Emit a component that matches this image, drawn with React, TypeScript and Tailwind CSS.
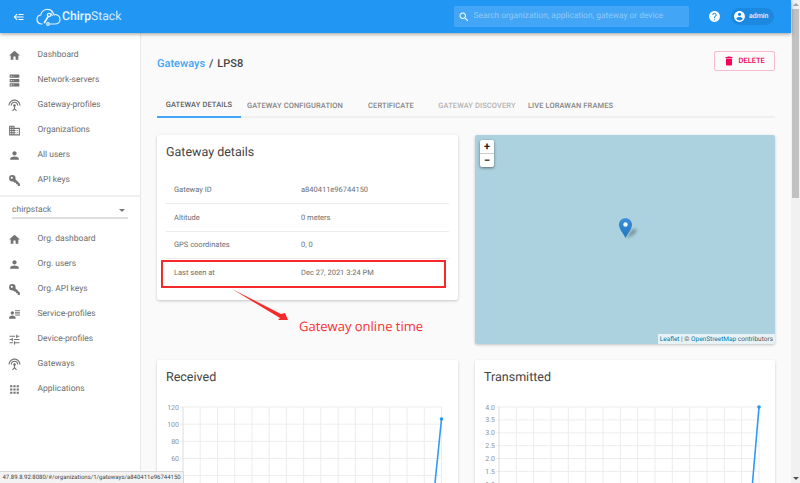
import React from 'react';

const icons = {
  home: 'M10 20v-6h4v6h5v-8h3L12 3 2 12h3v8z',
  server: 'M4,1H20A1,1 0 0,1 21,2V6A1,1 0 0,1 20,7H4A1,1 0 0,1 3,6V2A1,1 0 0,1 4,1M4,9H20A1,1 0 0,1 21,10V14A1,1 0 0,1 20,15H4A1,1 0 0,1 3,14V10A1,1 0 0,1 4,9M4,17H20A1,1 0 0,1 21,18V22A1,1 0 0,1 20,23H4A1,1 0 0,1 3,22V18A1,1 0 0,1 4,17M9,5H10V3H9V5M9,13H10V11H9V13M9,21H10V19H9V21M5,3V5H7V3H5M5,11V13H7V11H5M5,19V21H7V19H5Z',
  antenna: 'M12 5c-3.87 0-7 3.13-7 7h2c0-2.76 2.24-5 5-5s5 2.24 5 5h2c0-3.87-3.13-7-7-7zm1 9.29c.88-.39 1.5-1.26 1.5-2.29 0-1.38-1.12-2.5-2.5-2.5S9.5 10.62 9.5 12c0 1.02.62 1.9 1.5 2.29v3.3L7.59 21 9 22.41l3-3 3 3L16.41 21 13 17.59v-3.3zM12 1C5.93 1 1 5.93 1 12h2c0-4.97 4.03-9 9-9s9 4.03 9 9h2c0-6.07-4.93-11-11-11z',
  domain: 'M12 7V3H2v18h20V7H12zM6 19H4v-2h2v2zm0-4H4v-2h2v2zm0-4H4V9h2v2zm0-4H4V5h2v2zm4 12H8v-2h2v2zm0-4H8v-2h2v2zm0-4H8V9h2v2zm0-4H8V5h2v2zm10 12h-8v-2h2v-2h-2v-2h2v-2h-2V9h8v10zm-2-8h-2v2h2v-2zm0 4h-2v2h2v-2z',
  person: 'M12 12c2.21 0 4-1.79 4-4s-1.79-4-4-4-4 1.79-4 4 1.79 4 4 4zm0 2c-2.67 0-8 1.34-8 4v2h16v-2c0-2.66-5.33-4-8-4z',
  key: 'M22,18V22H18V19H15V16H12L9.74,13.74C9.19,13.91 8.61,14 8,14A6,6 0 0,1 2,8A6,6 0 0,1 8,2A6,6 0 0,1 14,8C14,8.61 13.91,9.19 13.74,9.74L22,18M7,5A2,2 0 0,0 5,7A2,2 0 0,0 7,9A2,2 0 0,0 9,7A2,2 0 0,0 7,5Z',
  details: 'M11,9C11,10.66 9.66,12 8,12C6.34,12 5,10.66 5,9C5,7.34 6.34,6 8,6C9.66,6 11,7.34 11,9M14,20H2V18C2,15.79 4.69,14 8,14C11.31,14 14,15.79 14,18M22,12V14H13V12M22,8V10H13V8M22,4V6H13V4Z',
  tune: 'M3 17v2h6v-2H3zM3 5v2h10V5H3zm10 16v-2h8v-2h-8v-2h-2v6h2zM7 9v2H3v2h4v2h2V9H7zm14 4v-2H11v2h10zm-6-4h2V7h4V5h-4V3h-2v6z',
  apps: 'M4 8h4V4H4v4zm6 12h4v-4h-4v4zm-6 0h4v-4H4v4zm0-6h4v-4H4v4zm6 0h4v-4h-4v4zm6-10v4h4V4h-4zm-6 4h4V4h-4v4zm6 6h4v-4h-4v4zm0 6h4v-4h-4v4z',
  trash: 'M6 19c0 1.1.9 2 2 2h8c1.1 0 2-.9 2-2V7H6v12zM19 4h-3.5l-1-1h-5l-1 1H5v2h14V4z',
  search: 'M15.5 14h-.79l-.28-.27C15.41 12.59 16 11.11 16 9.5 16 5.91 13.09 3 9.5 3S3 5.91 3 9.5 5.91 16 9.5 16c1.61 0 3.09-.59 4.23-1.57l.27.28v.79l5 4.99L20.49 19l-4.99-5zm-6 0C7.01 14 5 11.99 5 9.5S7.01 5 9.5 5 14 7.01 14 9.5 11.99 14 9.5 14z',
  help: 'M12 2C6.48 2 2 6.48 2 12s4.48 10 10 10 10-4.48 10-10S17.52 2 12 2zm1 17h-2v-2h2v2zm2.07-7.75l-.9.92C13.45 12.9 13 13.5 13 15h-2v-.5c0-1.1.45-2.1 1.17-2.83l1.24-1.26c.37-.36.59-.86.59-1.41 0-1.1-.9-2-2-2s-2 .9-2 2H8c0-2.21 1.79-4 4-4s4 1.79 4 4c0 .88-.36 1.68-.93 2.25z',
  account: 'M12 2C6.48 2 2 6.48 2 12s4.48 10 10 10 10-4.48 10-10S17.52 2 12 2zm0 3c1.66 0 3 1.34 3 3s-1.34 3-3 3-3-1.34-3-3 1.34-3 3-3zm0 14.2c-2.5 0-4.71-1.28-6-3.22.03-1.99 4-3.08 6-3.08 1.99 0 5.97 1.09 6 3.08-1.29 1.94-3.5 3.22-6 3.22z',
  back: 'M5,13L9,17L7.6,18.42L1.18,12L7.6,5.58L9,7L5,11H21V13H5M21,6V8H11V6H21M21,16V18H11V16H21Z',
};

type IconName = keyof typeof icons;

const Icon: React.FC<{ name: IconName; className?: string }> = ({ name, className }) => (
  <svg viewBox="0 0 24 24" fill="currentColor" className={className}>
    <path d={icons[name]} />
  </svg>
);

const topMenu: [IconName, string][] = [
  ['home', 'Dashboard'],
  ['server', 'Network-servers'],
  ['antenna', 'Gateway-profiles'],
  ['domain', 'Organizations'],
  ['person', 'All users'],
  ['key', 'API keys'],
];

const orgMenu: [IconName, string][] = [
  ['home', 'Org. dashboard'],
  ['person', 'Org. users'],
  ['key', 'Org. API keys'],
  ['details', 'Service-profiles'],
  ['tune', 'Device-profiles'],
  ['antenna', 'Gateways'],
  ['apps', 'Applications'],
];

const MenuItem: React.FC<{ icon: IconName; label: string }> = ({ icon, label }) => (
  <div className="flex h-[25px] items-center pl-[8px]">
    <Icon name={icon} className="h-[13px] w-[13px] shrink-0 text-[#737373]" />
    <span className="ml-[16.5px] text-[8.500px] text-[#6e6e6e]">{label}</span>
  </div>
);

const Sidebar = () => (
  <aside className="w-[141px] shrink-0 border-r border-[#e8e8e8] bg-white pt-[10px]">
    {topMenu.map(([icon, label]) => (
      <MenuItem key={label} icon={icon} label={label} />
    ))}
    <div className="mt-[2px] h-[2px] bg-[#f0f0f0]" />
    <div className="mx-3 mt-[2px] mb-[7.500px] flex h-[20px] items-center justify-between border-b-2 border-[#dedede] pt-[4px] pr-[3px]">
      <span className="text-[8.500px] text-[#6e6e6e]">chirpstack</span>
      <div className="h-0 w-0 border-x-[3px] border-t-[3px] border-x-transparent border-t-[#777]" />
    </div>
    {orgMenu.map(([icon, label]) => (
      <MenuItem key={label} icon={icon} label={label} />
    ))}
  </aside>
);

const Logo = () => (
  <svg viewBox="0 0 25 18" className="h-[18px] w-[25px] shrink-0" fill="none" stroke="#e8f4fe" strokeWidth="1.200" strokeLinecap="round">
    <path d="M6 16C3 16 1 14 1 11.300 1 9 2.600 7.400 4.700 7 5.300 3.600 8.200 1.300 11.500 1.300 13.500 1.300 15.200 2 16.500 3.300" />
    <path d="M19 6.500C22 6.800 24 8.800 24 11.500 24 14.200 21.800 16 19 16H14" />
    <path d="M8.500 14.500 12.200 8.400" strokeWidth="1.800" />
    <circle cx="13" cy="7" r="1.700" />
    <path d="M15.500 3.800C17 4.500 18 5.800 18.200 7.200" />
    <path d="M14.800 5.800C15.600 6.100 16.100 6.800 16.200 7.600" />
    <circle cx="12" cy="16" r="1.300" />
  </svg>
);

const Header = () => (
  <header className="relative z-10 flex h-[33px] shrink-0 items-center bg-[#2196f3] shadow-[0_1px_4px_rgba(0,0,0,0.4)]">
    <Icon name="back" className="ml-[12.500px] h-[12px] w-[12px] shrink-0 text-white" />
    <div className="ml-[11.500px]">
      <Logo />
    </div>
    <span className="ml-[1px] w-[60px] shrink-0 text-[12.200px] leading-none whitespace-nowrap text-[#d5ebfc]">
      <span className="font-medium text-[#eef7fe]">Chirp</span>Stack
    </span>
    <div className="ml-[332px] flex h-[21px] w-[235px] shrink-0 items-center rounded-[1px] bg-[#42a5f5]">
      <Icon name="search" className="ml-[3.500px] h-[12px] w-[12px] shrink-0 text-white" />
      <span className="ml-[4px] text-[8.400px] whitespace-nowrap text-[#90caf9]">Search organization, application, gateway or device</span>
    </div>
    <Icon name="help" className="ml-[18.500px] h-[13px] w-[13px] shrink-0 text-white" />
    <div className="ml-[10.500px] flex h-[17px] w-[43px] shrink-0 items-center rounded-full bg-[#1c88e0]">
      <Icon name="account" className="ml-[2px] h-[13px] w-[13px] shrink-0 text-white" />
      <span className="ml-[3px] text-[7px] font-medium text-[#e3f2fd]">admin</span>
    </div>
  </header>
);

const tabs = [
  { label: 'GATEWAY DETAILS', w: 'w-[84px]', text: 'text-[#5f5f5f]' },
  { label: 'GATEWAY CONFIGURATION', w: 'w-[108px]', text: 'text-[#858585]' },
  { label: 'CERTIFICATE', w: 'w-[84px]', text: 'text-[#858585]' },
  { label: 'GATEWAY DISCOVERY', w: 'w-[88px]', text: 'text-[#b4b4b4]' },
  { label: 'LIVE LORAWAN FRAMES', w: 'w-[99px]', text: 'text-[#858585]' },
];

const Tabs = () => (
  <div className="mt-[21px] flex h-[26px] border-b-2 border-[#f0f0f0]">
    {tabs.map((t, i) => (
      <div
        key={t.label}
        className={`-mb-[2px] flex items-center justify-center pt-[2px] text-[7.500px] font-medium tracking-[0.1px] whitespace-nowrap ${t.w} ${t.text} ${i === 0 ? 'border-b-2 border-[#42a5f5]' : ''}`}
      >
        {t.label}
      </div>
    ))}
  </div>
);

const rows = [
  ['Gateway ID', 'a840411e96744150'],
  ['Altitude', '0 meters'],
  ['GPS coordinates', '0, 0'],
  ['Last seen at', 'Dec 27, 2021 3:24 PM'],
];

const DetailsCard = () => (
  <div className="relative h-[165px] rounded-[2px] bg-white px-[9px] pt-[10px] shadow-[0_1px_3px_rgba(0,0,0,0.22)]">
    <div className="text-[12.500px] leading-[16px] text-[#444]">Gateway details</div>
    <div className="mt-[15.500px]">
      {rows.map(([k, v]) => (
        <div key={k} className="grid h-[27.500px] grid-cols-[127px_1fr] items-center border-b border-[#ececec] pl-2 text-[7.500px] text-[#6e6e6e]">
          <span>{k}</span>
          <span>{v}</span>
        </div>
      ))}
    </div>
    {/* red annotation box drawn over the last row */}
    <div className="absolute top-[125px] left-[4px] h-[28px] w-[285px] border-2 border-[#f62a2a]" />
  </div>
);

const Annotation = () => (
  <>
    <svg className="absolute top-[288px] left-[231px]" width="60" height="34" viewBox="0 0 60 34">
      <path d="M1 1 L50 26 L54 25 L57 32 L47 32 L49 30 Z" fill="#f62a2a" />
    </svg>
    <span className="absolute top-[316px] left-[299px] font-['Open_Sans',sans-serif] text-[13px] leading-[20px] text-[#f63030]">Gateway online time</span>
  </>
);

const MapCard = () => (
  <div className="relative h-[209px] overflow-hidden rounded-[2px] bg-[#acd2df] shadow-[0_1px_3px_rgba(0,0,0,0.22)]">
    <div className="absolute top-[5px] left-[5px] w-[14px] rounded-[2px] bg-white text-center text-[#222] shadow-[0_1px_3px_rgba(0,0,0,0.5)]">
      <div className="flex h-[13.500px] items-center justify-center border-b border-[#ccc] text-[11px] leading-none font-bold">+</div>
      <div className="flex h-[13.500px] items-center justify-center text-[11px] leading-none font-bold">−</div>
    </div>
    <svg className="absolute top-[82px] left-[142px]" width="26" height="24" viewBox="0 0 26 24">
      <defs>
        <linearGradient id="pin" x1="0" y1="0" x2="0" y2="1">
          <stop offset="0" stopColor="#3a8fd6" />
          <stop offset="1" stopColor="#2176bd" />
        </linearGradient>
        <filter id="blur" x="-50%" y="-50%" width="200%" height="200%">
          <feGaussianBlur stdDeviation="1.500" />
        </filter>
      </defs>
      <path d="M9 21 L15 13 C18 11 21 12 19 15 C17 18 13 20 9 21Z" fill="#4a5f68" opacity="0.55" filter="url(#blur)" />
      <path d="M8.500 21 C7 17 2 12.500 2 7.500 C2 3.900 5 1.200 8.500 1.200 C12 1.200 15 3.900 15 7.500 C15 12.500 10 17 8.500 21Z" fill="url(#pin)" />
      <circle cx="8.500" cy="7.500" r="2.200" fill="#f4f8fb" />
    </svg>
    <div className="absolute right-0 bottom-0 flex h-[10px] items-center bg-white/70 px-[2px] text-[6.500px] leading-none whitespace-nowrap text-[#555]">
      <span className="text-[#0078a8]">Leaflet</span>
      <span>&nbsp;| ©&nbsp;</span>
      <span className="text-[#0078a8]">OpenStreetMap</span>
      <span>&nbsp;contributors</span>
    </div>
  </div>
);

// only the part of each chart that fits above the fold is drawn
const Chart: React.FC<{
  left: number;
  right: number;
  ticks: string[];
  rows: number;
  step: number;
  point: [number, number];
  end: [number, number];
}> = ({ left, right, ticks, rows, step, point, end }) => {
  const dx = (right - left) / 15;
  const vlines = Array.from({ length: 16 }, (_, i) => left + i * dx);
  const hlines = Array.from({ length: rows }, (_, i) => 8 + i * step);
  return (
    <svg width="301" height="90" className="mt-[13px] block">
      {hlines.map(y => (
        <line key={y} x1={left - 3} x2={right} y1={y} y2={y} stroke="#ededed" strokeWidth="1" />
      ))}
      {ticks.map((t, i) => (
        <text key={t} x={left - 4} y={8 + i * step + 2.500} textAnchor="end" fontSize="7" fill="#919191">
          {t}
        </text>
      ))}
      {vlines.map((x, i) => (
        <line key={i} x1={x} x2={x} y1={8} y2={90} stroke={i === 0 ? '#dcdcdc' : '#ededed'} strokeWidth="1" />
      ))}
      <line x1={end[0]} y1={end[1]} x2={point[0]} y2={point[1]} stroke="#2f9bf4" strokeWidth="1.600" />
      <circle cx={point[0]} cy={point[1]} r="1.800" fill="#2196f3" />
    </svg>
  );
};

const ChartCard: React.FC<{ title: string; children: React.ReactNode }> = ({ title, children }) => (
  <div className="rounded-[2px] bg-white pt-[10px] shadow-[0_1px_3px_rgba(0,0,0,0.18)]">
    <div className="px-[9px] text-[12.500px] leading-[16px] text-[#444]">{title}</div>
    {children}
  </div>
);

const Scrollbar = () => (
  <div className="flex w-[9px] shrink-0 flex-col items-center bg-[#f1f1f1]">
    <div className="mt-[3px] h-0 w-0 border-x-[3px] border-b-[3px] border-x-transparent border-b-[#a3a3a3]" />
    <div className="mt-[3px] h-[189px] w-[7px] bg-[#c1c1c1]" />
    <div className="mt-auto mb-[3px] h-0 w-0 border-x-[3px] border-t-[3px] border-x-transparent border-t-[#505050]" />
  </div>
);

export default function App() {
  return (
    <div className="relative flex h-[483px] w-[800px] overflow-hidden bg-[#fafafa] font-['Roboto',sans-serif] [text-rendering:geometricPrecision]">
      <div className="flex min-w-0 flex-1 flex-col">
        <Header />
        <div className="flex min-h-0 flex-1">
          <Sidebar />
          <main className="min-w-0 flex-1 px-4">
            <div className="mt-[18px] flex h-[20px] items-center justify-between">
              <div className="mt-[6px] text-[11px] font-medium">
                <span className="text-[#42a5f5]">Gateways</span>
                <span className="ml-[4px] text-[#444]">/</span>
                <span className="ml-[4px] text-[#444]">LPS8</span>
              </div>
              <div className="flex h-[20px] w-[61px] items-center rounded-[2px] border border-[#f8bbd0] pl-[7.500px] text-[#f50057]">
                <Icon name="trash" className="h-[12px] w-[12px] shrink-0" />
                <span className="ml-[4px] text-[7.500px] font-medium">DELETE</span>
              </div>
            </div>
            <Tabs />
            <div className="mt-[17px] grid grid-cols-[301px_300px] items-start gap-x-[17px]">
              <DetailsCard />
              <MapCard />
            </div>
            <div className="mt-[16px] grid grid-cols-[301px_300px] gap-x-[17px]">
              <ChartCard title="Received">
                <Chart left={26} right={284.500} ticks={['120', '100', '80', '60']} rows={5} step={17.150} point={[284.500, 20]} end={[278, 84]} />
              </ChartCard>
              <ChartCard title="Transmitted">
                <Chart left={24} right={284} ticks={['4.0', '3.5', '3.0', '2.5', '2.0', '1.5', '1.0']} rows={7} step={12.900} point={[284, 8]} end={[277.500, 84]} />
              </ChartCard>
            </div>
          </main>
        </div>
      </div>
      <Scrollbar />
      <Annotation />
      <div className="absolute bottom-0 left-0 flex h-[12px] items-center rounded-tr-[2px] border-t border-r border-[#d8d8d8] bg-[#f3f3f3] px-[2.500px] text-[6px] whitespace-nowrap text-[#444]">
        47.89.8.92:8080/#/organizations/1/gateways/a840411e96744150
      </div>
    </div>
  );
}
